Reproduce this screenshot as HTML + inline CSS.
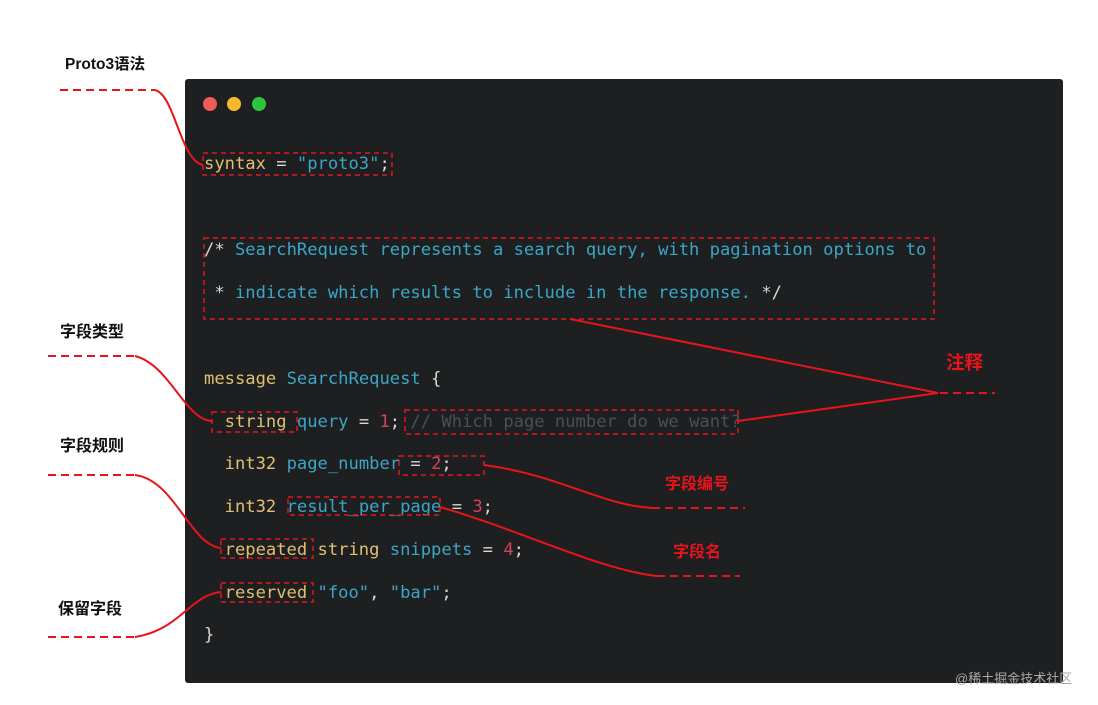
<!DOCTYPE html>
<html><head><meta charset="utf-8"><style>
html,body{margin:0;padding:0;background:#fff;width:1098px;height:705px;overflow:hidden;position:relative}
.card{position:absolute;left:185px;top:79px;width:878px;height:604px;background:#1e1f21;border-radius:3px}
.code{position:absolute;left:204px;font-family:"DejaVu Sans Mono","Liberation Mono",monospace;font-size:17.15px;white-space:pre;line-height:20px;color:#d8d8d8}
.y{color:#e2c06e}.c{color:#3aa7c6}.r{color:#d0465c}.g{color:#4a5058}.w{color:#d8d8d8}
.lab{position:absolute;font-family:"Liberation Sans","Noto Sans CJK SC",sans-serif;font-weight:bold;font-size:16px;color:#111}
.red{color:#e8141c}
.wm{position:absolute;left:955px;top:668px;font-family:"Liberation Sans","Noto Sans CJK SC",sans-serif;font-size:13px;color:#aaa}
svg{position:absolute;left:0;top:0}
</style></head><body>
<div class="card"></div>
<div class="code" style="top:154px"><span class="y">syntax</span> = <span class="c">"proto3"</span>;</div>
<div class="code" style="top:240px"><span class="w">/*</span> <span class="c">SearchRequest represents a search query, with pagination options to</span></div>
<div class="code" style="top:283px"><span class="w"> *</span> <span class="c">indicate which results to include in the response.</span> */</div>
<div class="code" style="top:369px"><span class="y">message</span> <span class="c">SearchRequest</span> {</div>
<div class="code" style="top:412px">  <span class="y">string</span> <span class="c">query</span> = <span class="r">1</span>; <span class="g">// Which page number do we want?</span></div>
<div class="code" style="top:454px">  <span class="y">int32</span> <span class="c">page_number</span> = <span class="r">2</span>;</div>
<div class="code" style="top:497px">  <span class="y">int32</span> <span class="c">result_per_page</span> = <span class="r">3</span>;</div>
<div class="code" style="top:540px">  <span class="y">repeated</span> <span class="y">string</span> <span class="c">snippets</span> = <span class="r">4</span>;</div>
<div class="code" style="top:583px">  <span class="y">reserved</span> <span class="c">"foo"</span>, <span class="c">"bar"</span>;</div>
<div class="code" style="top:625px">}</div>
<svg width="1098" height="705">
<circle cx="210" cy="104" r="7" fill="#f05a57"/><circle cx="234" cy="104" r="7" fill="#f6b82d"/><circle cx="259" cy="104" r="7" fill="#2dc53f"/>
<g fill="none" stroke="#e8141c" stroke-width="1.5" stroke-dasharray="5,4">
<rect x="203" y="153" width="189" height="22"/>
<rect x="204" y="238" width="730" height="81"/>
<rect x="212" y="412" width="85" height="20"/>
<rect x="405" y="410" width="333" height="24"/>
<rect x="399" y="456" width="85" height="19"/>
<rect x="288" y="497" width="152" height="18"/>
<rect x="221" y="539" width="92" height="19"/>
<rect x="221" y="583" width="92" height="19"/>
</g>
<g fill="none" stroke="#e8141c" stroke-width="2" stroke-dasharray="8,5">
<path d="M60 90H155M48 356H135M48 475H135M48 637H135M940 393H995M652 508H745M657 576H740"/>
</g>
<g fill="none" stroke="#e8141c" stroke-width="2">
<path d="M155 90C175 95 180 160 203 165"/>
<path d="M135 356C170 365 185 420 212 421"/>
<path d="M135 475C175 480 190 545 221 548"/>
<path d="M135 637C180 630 190 595 221 592"/>
<path d="M570 319L938 393L738 421"/>
<path d="M484 465C560 475 600 505 652 508"/>
<path d="M440 507C520 530 600 570 657 576"/>
</g>
</svg>
<div class="lab" style="left:65px;top:52px;font-size:15.5px">Proto3语法</div>
<div class="lab" style="left:60px;top:318px">字段类型</div>
<div class="lab" style="left:60px;top:432px">字段规则</div>
<div class="lab" style="left:58px;top:595px">保留字段</div>
<div class="lab red" style="left:946px;top:349px;font-size:18.5px">注释</div>
<div class="lab red" style="left:665px;top:470px">字段编号</div>
<div class="lab red" style="left:673px;top:538px">字段名</div>
<div class="wm">@稀土掘金技术社区</div>
</body></html>
